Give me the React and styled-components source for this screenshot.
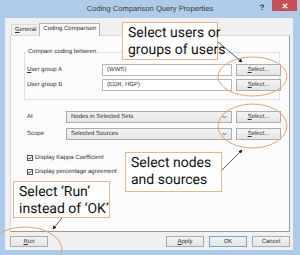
import React from 'react';
import styled, { createGlobalStyle } from 'styled-components';

const GlobalStyle = createGlobalStyle`
  html, body {
    margin: 0;
    padding: 0;
    background: #aecbea;
  }
`;

const Check = () => (
  <CheckBox>
    <svg width="4" height="4" viewBox="0 0 4 4">
      <path d="M0.4 2 L1.5 3.2 L3.6 0.6" stroke="#222" strokeWidth="0.9" fill="none" />
    </svg>
  </CheckBox>
);

const Arrow = () => (
  <Chevron width="5" height="4" viewBox="0 0 5 4">
    <path d="M0.5 1 L2.5 3 L4.5 1" stroke="#555" strokeWidth="0.8" fill="none" />
  </Chevron>
);

const App = () => {
  return (
    <>
      <GlobalStyle />
      <Window>
        <TitleBar>
          <Title>Coding Comparison Query Properties</Title>
          <HelpButton>?</HelpButton>
          <CloseButton>
            <svg width="6" height="6" viewBox="0 0 6 6">
              <path d="M0.8 0.8 L5.2 5.2 M5.2 0.8 L0.8 5.2" stroke="#fff" strokeWidth="1.3" />
            </svg>
          </CloseButton>
        </TitleBar>

        <Client>
          <TabStrip>
            <Tab><Key>G</Key>eneral</Tab>
            <Tab $active>Coding Comparison</Tab>
          </TabStrip>

          <Pane>
            <GroupBox>
              <GroupTitle>Compare coding between</GroupTitle>
              <GroupGrid>
                <Label><Key>U</Key>ser group A</Label>
                <Field>(WWS)</Field>
                <PushButton><Key>S</Key>elect...</PushButton>
                <Label>User group B</Label>
                <Field>(EDR, HGP)</Field>
                <PushButton><Key>S</Key>elect...</PushButton>
              </GroupGrid>
            </GroupBox>

            <OptionRow $top={11}>
              <Label>At</Label>
              <Dropdown>
                Nodes in Selected Sets
                <Arrow />
              </Dropdown>
              <PushButton><Key>S</Key>elect...</PushButton>
            </OptionRow>

            <OptionRow $top={5}>
              <Label>Scope</Label>
              <Dropdown>
                Selected Sources
                <Arrow />
              </Dropdown>
              <PushButton><Key>S</Key>elect...</PushButton>
            </OptionRow>

            <CheckRow $top={15}>
              <Check />
              <span>Display Kappa Coefficient</span>
            </CheckRow>
            <CheckRow $top={8}>
              <Check />
              <span>Display percentage agreement</span>
            </CheckRow>
          </Pane>

          <ButtonRow>
            <DialogButton><Key>R</Key>un</DialogButton>
            <Spacer />
            <DialogButton><Key>A</Key>pply</DialogButton>
            <DialogButton $default>OK</DialogButton>
            <DialogButton>Cancel</DialogButton>
          </ButtonRow>
        </Client>

        <Callout $x={122} $y={22} $w={96} $h={38}>
          Select users or<br />groups of users
        </Callout>
        <Callout $x={125} $y={152} $w={97} $h={40}>
          Select nodes<br />and sources
        </Callout>
        <Callout $x={13} $y={181} $w={97} $h={37}>
          Select ‘Run’<br />instead of ‘OK’
        </Callout>

        <Markup viewBox="0 0 300 255">
          <defs>
            <marker id="head" viewBox="0 0 6 6" refX="5" refY="3" markerWidth="5" markerHeight="5" orient="auto">
              <path d="M0 0 L6 3 L0 6 z" fill="#222" />
            </marker>
          </defs>
          <ellipse cx="252.5" cy="76.5" rx="34.5" ry="19.5" fill="none" stroke="#e2a477" strokeWidth="1" />
          <ellipse cx="252.5" cy="126" rx="34.5" ry="22" fill="none" stroke="#e2a477" strokeWidth="1" />
          <ellipse cx="25" cy="250" rx="37" ry="23" fill="none" stroke="#e2a477" strokeWidth="1" />
          <line x1="218" y1="42" x2="242" y2="62" stroke="#333" strokeWidth="0.8" markerEnd="url(#head)" />
          <line x1="222" y1="170" x2="242" y2="150" stroke="#333" strokeWidth="0.8" markerEnd="url(#head)" />
          <line x1="62" y1="218" x2="53" y2="229" stroke="#333" strokeWidth="0.8" markerEnd="url(#head)" />
        </Markup>
      </Window>
    </>
  );
};

const Window = styled.div`
  position: relative;
  width: 300px;
  height: 255px;
  background: #aecbea;
  display: flex;
  flex-direction: column;
  overflow: hidden;
  font-family: "Liberation Sans", Arial, sans-serif;
  color: #2e2e2e;
  text-rendering: geometricPrecision;
`;

const TitleBar = styled.div`
  height: 18px;
  display: flex;
  align-items: flex-start;
  flex-shrink: 0;
`;

const Title = styled.div`
  flex: 1;
  padding-left: 44px;
  margin-top: 4px;
  text-align: center;
  font-size: 7.6px;
  line-height: 9px;
  color: #3c3c3c;
`;

const HelpButton = styled.div`
  width: 12px;
  margin-top: 3px;
  margin-right: 4px;
  text-align: center;
  font-size: 8px;
  font-weight: bold;
  line-height: 9px;
  color: #3a3a3a;
`;

const CloseButton = styled.div`
  width: 25px;
  height: 11px;
  margin-right: 3px;
  background: #c75050;
  display: flex;
  align-items: center;
  justify-content: center;
`;

const Client = styled.div`
  flex: 1;
  margin: 0 7px 5px 5px;
  background: #f0f0f0;
  display: flex;
  flex-direction: column;
`;

const TabStrip = styled.div`
  height: 17px;
  display: flex;
  align-items: flex-end;
  padding-left: 6px;
  flex-shrink: 0;
`;

const Tab = styled.div`
  position: relative;
  z-index: ${(p) => (p.$active ? 1 : 0)};
  height: ${(p) => (p.$active ? 13 : 11)}px;
  box-sizing: border-box;
  padding: 0 3px;
  margin-bottom: ${(p) => (p.$active ? -1 : 0)}px;
  margin-right: -1px;
  border: 1px solid ${(p) => (p.$active ? '#b4b4b4' : '#dadada')};
  border-bottom: none;
  background: ${(p) => (p.$active ? '#fcfcfc' : '#f0f0f0')};
  font-size: 6px;
  line-height: ${(p) => (p.$active ? 11 : 10)}px;
  white-space: nowrap;
`;

const Pane = styled.div`
  height: 197px;
  box-sizing: border-box;
  margin: 0 3px 0 5px;
  padding: 16px 9px 0 13px;
  background: #fcfcfc;
  border: 1px solid;
  border-color: #d9d9d9 #9a9a9a #9a9a9a #d9d9d9;
  flex-shrink: 0;
`;

const GroupBox = styled.div`
  position: relative;
  height: 48px;
  box-sizing: border-box;
  padding: 11px 2px 0 2px;
  border: 1px solid #dcdfe3;
`;

const GroupTitle = styled.span`
  position: absolute;
  top: -4px;
  left: 2px;
  padding: 0 1px;
  background: #fcfcfc;
  font-size: 6px;
  line-height: 7px;
`;

const GroupGrid = styled.div`
  display: grid;
  grid-template-columns: 71px 130px 45px;
  grid-auto-rows: 12px;
  column-gap: 4px;
  row-gap: 3px;
`;

const Label = styled.div`
  display: flex;
  align-items: center;
  font-size: 6px;
  white-space: pre;
`;

const Key = styled.span`
  text-decoration: underline;
  text-decoration-thickness: 0.5px;
`;

const Field = styled.div`
  display: flex;
  align-items: center;
  box-sizing: border-box;
  padding-left: 4px;
  border: 1px solid #b5b7bd;
  background: #fff;
  font-size: 6px;
`;

const PushButton = styled.div`
  display: flex;
  align-items: center;
  justify-content: center;
  box-sizing: border-box;
  border: 1px solid #acacac;
  background: linear-gradient(#f3f3f3, #e5e5e5);
  font-size: 6px;
`;

const OptionRow = styled.div`
  display: grid;
  grid-template-columns: 35px 166px 45px;
  column-gap: 4px;
  height: 12px;
  margin: ${(p) => p.$top}px 0 0 3px;
`;

const Dropdown = styled.div`
  display: flex;
  align-items: center;
  justify-content: space-between;
  box-sizing: border-box;
  padding: 0 4px;
  border: 1px solid #acacac;
  background: linear-gradient(#f2f2f2, #e6e6e6);
  font-size: 6px;
`;

const Chevron = styled.svg`
  display: block;
`;

const CheckRow = styled.div`
  display: flex;
  align-items: center;
  gap: 2px;
  height: 6px;
  margin: ${(p) => p.$top}px 0 0 3px;
  font-size: 6px;
  white-space: nowrap;
`;

const CheckBox = styled.span`
  width: 6px;
  height: 6px;
  box-sizing: border-box;
  border: 1px solid #555;
  background: #fff;
  display: flex;
  align-items: center;
  justify-content: center;
`;

const ButtonRow = styled.div`
  display: flex;
  gap: 5px;
  height: 11px;
  margin: 4px 3px 0 5px;
`;

const Spacer = styled.div`
  flex: 1;
`;

const DialogButton = styled.div`
  width: 38px;
  display: flex;
  align-items: center;
  justify-content: center;
  box-sizing: border-box;
  border: 1px solid ${(p) => (p.$default ? '#6fa7de' : '#acacac')};
  background: linear-gradient(#f3f3f3, #e5e5e5);
  font-size: 6px;
`;

const Callout = styled.div`
  position: absolute;
  left: ${(p) => p.$x}px;
  top: ${(p) => p.$y}px;
  width: ${(p) => p.$w}px;
  height: ${(p) => p.$h}px;
  box-sizing: border-box;
  padding: 2px 0 0 5px;
  background: #fff;
  border: 1px solid #e6b68e;
  font-family: "Liberation Sans Narrow", Roboto, sans-serif;
  font-size: 14px;
  line-height: 17px;
  color: #111;
  white-space: nowrap;
`;

const Markup = styled.svg`
  position: absolute;
  left: 0;
  top: 0;
  width: 300px;
  height: 255px;
  pointer-events: none;
`;

export default App;
